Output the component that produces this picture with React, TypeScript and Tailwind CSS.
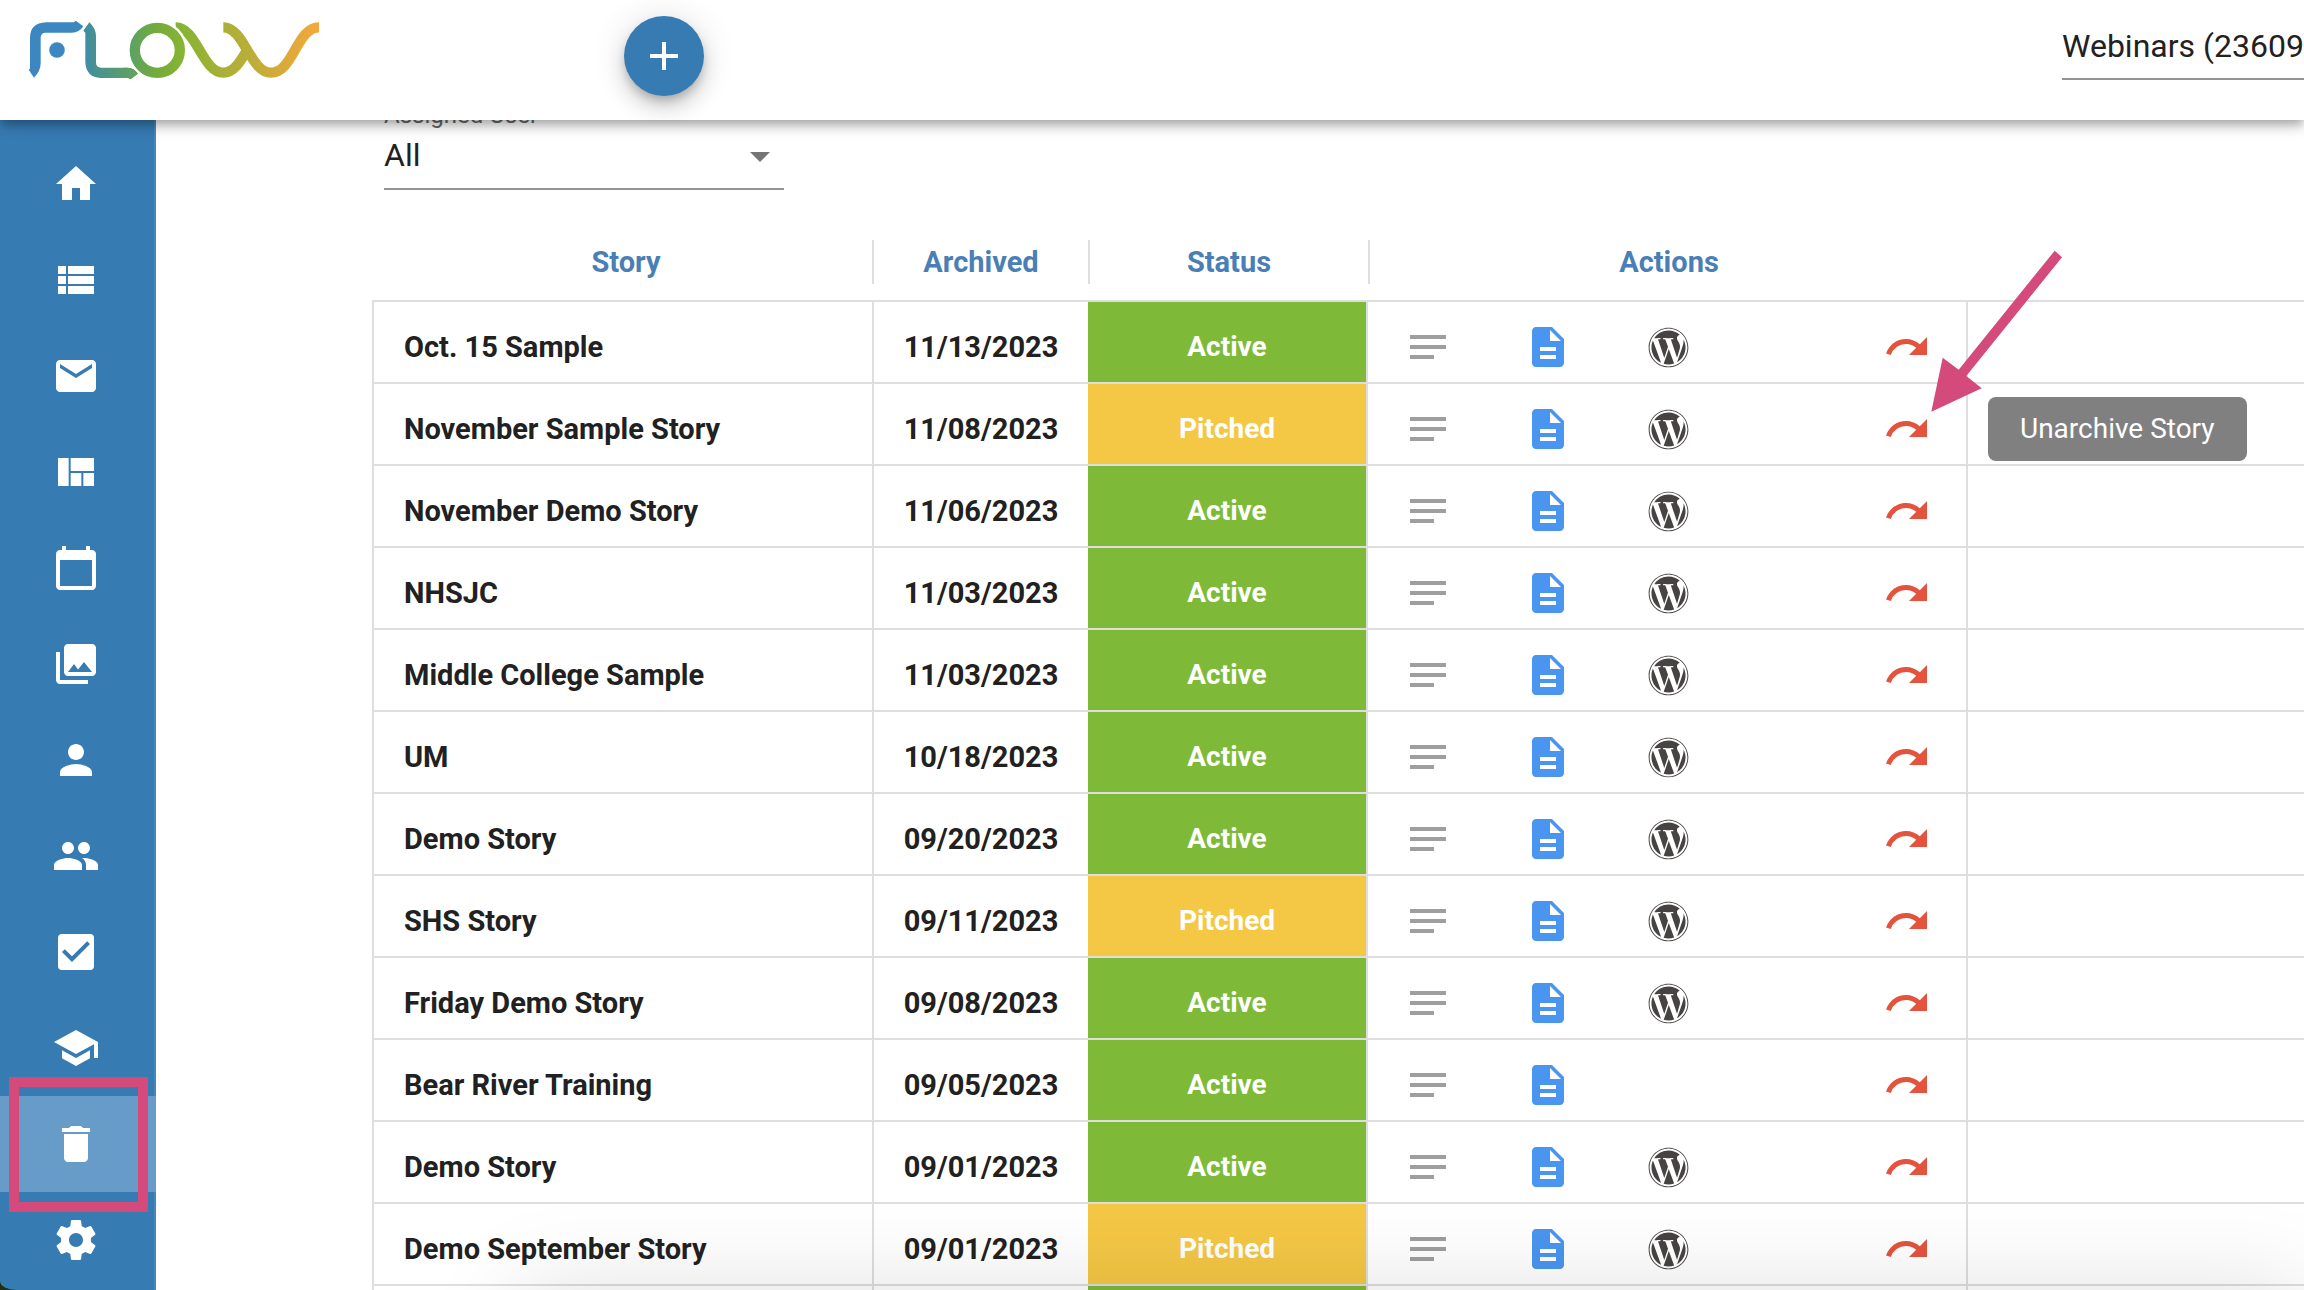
import type { ReactNode } from "react";
import type { IconType } from "react-icons";
import {
  MdAdd,
  MdArrowDropDown,
  MdCalendarToday,
  MdCheckBox,
  MdDelete,
  MdDescription,
  MdEmail,
  MdHome,
  MdNotes,
  MdPeople,
  MdPerson,
  MdPhotoLibrary,
  MdRedo,
  MdSchool,
  MdViewList,
  MdViewQuilt,
} from "react-icons/md";
import { FaWordpress } from "react-icons/fa";

type Status = "Active" | "Pitched";

interface Story {
  title: string;
  archived: string;
  status: Status;
  wordpress: boolean;
  tooltip?: boolean;
}

const stories: Story[] = [
  { title: "Oct. 15 Sample", archived: "11/13/2023", status: "Active", wordpress: true },
  { title: "November Sample Story", archived: "11/08/2023", status: "Pitched", wordpress: true, tooltip: true },
  { title: "November Demo Story", archived: "11/06/2023", status: "Active", wordpress: true },
  { title: "NHSJC", archived: "11/03/2023", status: "Active", wordpress: true },
  { title: "Middle College Sample", archived: "11/03/2023", status: "Active", wordpress: true },
  { title: "UM", archived: "10/18/2023", status: "Active", wordpress: true },
  { title: "Demo Story", archived: "09/20/2023", status: "Active", wordpress: true },
  { title: "SHS Story", archived: "09/11/2023", status: "Pitched", wordpress: true },
  { title: "Friday Demo Story", archived: "09/08/2023", status: "Active", wordpress: true },
  { title: "Bear River Training", archived: "09/05/2023", status: "Active", wordpress: false },
  { title: "Demo Story", archived: "09/01/2023", status: "Active", wordpress: true },
  { title: "Demo September Story", archived: "09/01/2023", status: "Pitched", wordpress: true },
];

function GearIcon({ className }: { className?: string }) {
  return (
    <svg viewBox="0 0 24 24" className={className} fill="currentColor" aria-hidden="true">
      <path d="M19.43 12.98c.04-.32.07-.64.07-.98s-.03-.66-.07-.98l2.11-1.65c.19-.15.24-.42.12-.64l-2-3.46c-.12-.22-.39-.3-.61-.22l-2.49 1c-.52-.4-1.08-.73-1.69-.98l-.38-2.65C14.46 2.18 14.25 2 14 2h-4c-.25 0-.46.18-.49.42l-.38 2.65c-.61.25-1.17.59-1.69.98l-2.49-1c-.23-.09-.49 0-.61.22l-2 3.46c-.13.22-.07.49.12.64l2.11 1.65c-.04.32-.07.65-.07.98s.03.66.07.98l-2.11 1.65c-.19.15-.24.42-.12.64l2 3.46c.12.22.39.3.61.22l2.49-1c.52.4 1.08.73 1.69.98l.38 2.65c.03.24.24.42.49.42h4c.25 0 .46-.18.49-.42l.38-2.65c.61-.25 1.17-.59 1.69-.98l2.49 1c.23.09.49 0 .61-.22l2-3.46c.12-.22.07-.49-.12-.64l-2.11-1.65zM12 15.5c-1.93 0-3.5-1.57-3.5-3.5s1.57-3.5 3.5-3.5 3.5 1.57 3.5 3.5-1.57 3.5-3.5 3.5z" />
    </svg>
  );
}

interface NavItem {
  label: string;
  icon: IconType | typeof GearIcon;
  active?: boolean;
}

const navItems: NavItem[] = [
  { label: "Home", icon: MdHome },
  { label: "Stories", icon: MdViewList },
  { label: "Mail", icon: MdEmail },
  { label: "Boards", icon: MdViewQuilt },
  { label: "Calendar", icon: MdCalendarToday },
  { label: "Media library", icon: MdPhotoLibrary },
  { label: "Profile", icon: MdPerson },
  { label: "Team", icon: MdPeople },
  { label: "Tasks", icon: MdCheckBox },
  { label: "Training", icon: MdSchool },
  { label: "Archive", icon: MdDelete, active: true },
  { label: "Settings", icon: GearIcon },
];

function Logo() {
  return (
    <svg viewBox="0 0 1200 360" className="h-[120px] w-[400px] shrink-0" role="img" aria-label="Flow">
      <defs>
        <linearGradient id="flow" gradientUnits="userSpaceOnUse" x1="90" y1="0" x2="957" y2="0">
          <stop offset="0.17" stopColor="#3c87c0" />
          <stop offset="0.21" stopColor="#448f98" />
          <stop offset="0.36" stopColor="#5fa35f" />
          <stop offset="0.44" stopColor="#74ab3a" />
          <stop offset="0.53" stopColor="#88b434" />
          <stop offset="0.67" stopColor="#a9b037" />
          <stop offset="0.75" stopColor="#b8ae37" />
          <stop offset="0.84" stopColor="#d0ab39" />
          <stop offset="1" stopColor="#f5a83b" />
        </linearGradient>
        <clipPath id="rise">
          <path d="M500 40H722L748 150V260H500Z" />
        </clipPath>
      </defs>
      <path
        fill="url(#flow)"
        d="M90 206L86 209L102 233Q122 213 122 190V114Q122 98 138 98H215Q238 98 250 79L227 62L222 67H138Q90 69 90 114Z"
      />
      <circle cx="171" cy="150" r="23.5" fill="url(#flow)" />
      <path
        fill="url(#flow)"
        d="M268 67L250 92L256 98V186Q258 232 302 234H385L391 238L414 221Q402 203 383 203H304Q288 203 288 187V110Q288 85 268 67Z"
      />
      <g fill="none" stroke="url(#flow)" strokeWidth="31">
        <path clipPath="url(#rise)" d="M527 82C590 82 607 218 670 218C733 218 750 82 813 82" />
        <path d="M670 82C733 82 750 218 813 218C880 218 890 82 957 82" />
      </g>
      <circle cx="472" cy="151" r="90" fill="#fff" />
      <path fill="url(#flow)" d="M414 221Q402 203 383 203H370V234H385L391 238Z" />
      <circle cx="472" cy="151" r="67.5" fill="none" stroke="url(#flow)" strokeWidth="31" />
    </svg>
  );
}

function Header() {
  return (
    <header className="relative z-20 flex h-[120px] shrink-0 items-start bg-white shadow-[0_4px_8px_-2px_rgba(0,0,0,0.2),0_8px_10px_0_rgba(0,0,0,0.14),0_2px_20px_0_rgba(0,0,0,0.12)]">
      <Logo />
      <button
        type="button"
        aria-label="Add"
        className="mt-4 ml-56 flex size-20 shrink-0 items-center justify-center rounded-full bg-[#377bb3] text-white shadow-[0_6px_10px_-2px_rgba(0,0,0,0.2),0_12px_20px_0_rgba(0,0,0,0.14),0_2px_36px_0_rgba(0,0,0,0.12)]"
      >
        <MdAdd className="size-12" />
      </button>
      <div className="ml-auto w-[242px] overflow-hidden pt-3">
        <select
          aria-label="Organization"
          className="h-[68px] w-[400px] appearance-none border-b-2 border-[#949494] bg-transparent pt-0.5 text-[32px] text-[#212121]"
        >
          <option>Webinars (23609)</option>
        </select>
      </div>
    </header>
  );
}

function Sidebar() {
  return (
    <div className="flex shrink-0 bg-[#22300c]">
      <nav className="w-[156px] rounded-bl-[16px_9px] border-r-2 border-[#4787bb] bg-[#377bb3] pt-4">
        {navItems.map(({ label, icon: Icon, active }) => (
          <a
            key={label}
            href="#"
            aria-label={label}
            className={
              active
                ? "relative -mr-0.5 flex h-24 items-center bg-[#689cc8] pl-[52px] text-white"
                : "flex h-24 items-center pl-[52px] text-white"
            }
          >
            <Icon className="size-12" />
            {active && <span className="absolute -top-[19px] left-[9px] h-[135px] w-[139px] border-10 border-[#d44a7a]" />}
          </a>
        ))}
      </nav>
    </div>
  );
}

function ActionSlot({ children, last }: { children?: ReactNode; last?: boolean }) {
  return (
    <div className={last ? "relative flex h-12 w-[118px] items-center justify-center" : "flex h-12 w-[120px] items-center justify-center"}>
      {children}
    </div>
  );
}

function IconButton({ label, className, children }: { label: string; className: string; children: ReactNode }) {
  return (
    <button type="button" aria-label={label} className={className}>
      {children}
    </button>
  );
}

function PointerArrow() {
  return (
    <svg viewBox="0 0 132 163" className="absolute -top-[155px] left-[83px] z-10 h-[163px] w-[132px]" aria-hidden="true">
      <path fill="#d44a7a" d="M0.3 161.7L11.7 107.7L27.7 119.7L123.7 0.7L131 7.3L35.3 126L50.7 138.3Z" />
    </svg>
  );
}

function StoryRow({ story }: { story: Story }) {
  return (
    <tr>
      <td className="border-2 border-b-0 border-[#dedede] p-0">
        <div className="flex h-20 items-center pt-2.5 pl-[30px] font-bold">{story.title}</div>
      </td>
      <td className="border-t-2 border-[#dedede] p-0">
        <div className="flex h-20 items-center justify-center pt-2.5 font-bold">{story.archived}</div>
      </td>
      <td className="border-t-2 border-r-2 border-[#dedede] p-0">
        <div
          className={
            story.status === "Active"
              ? "flex h-20 items-center justify-center bg-[#7eba38] pt-2.5 text-[28px] font-bold text-white"
              : "flex h-20 items-center justify-center bg-[#f4c745] pt-2.5 text-[28px] font-bold text-white"
          }
        >
          {story.status}
        </div>
      </td>
      <td className="border-t-2 border-r-2 border-[#dedede] p-0">
        <div className="flex h-20 items-center pt-2.5">
          <ActionSlot>
            <IconButton label="Notes" className="text-[#9e9e9e]">
              <MdNotes className="size-12" />
            </IconButton>
          </ActionSlot>
          <ActionSlot>
            <IconButton label="Document" className="text-[#4a95ef]">
              <MdDescription className="size-12" />
            </IconButton>
          </ActionSlot>
          <ActionSlot>
            {story.wordpress && (
              <IconButton label="WordPress" className="text-[#464342]">
                <FaWordpress className="size-[41px]" />
              </IconButton>
            )}
          </ActionSlot>
          <ActionSlot />
          <ActionSlot last>
            <IconButton label="Unarchive" className="text-[#e4533e]">
              <MdRedo className="size-12" />
            </IconButton>
            {story.tooltip && (
              <>
                <span
                  role="tooltip"
                  className="absolute -top-2 left-[140px] flex h-16 items-center rounded-lg bg-[#808080] px-8 text-[28px] whitespace-nowrap text-white"
                >
                  Unarchive Story
                </span>
                <PointerArrow />
              </>
            )}
          </ActionSlot>
        </div>
      </td>
      <td className="border-t-2 border-[#dedede] p-0" />
    </tr>
  );
}

function NextRowEdge() {
  return (
    <tr aria-hidden="true">
      <td className="h-20 border-2 border-b-0 border-[#dedede] p-0" />
      <td className="border-t-2 border-[#dedede] p-0" />
      <td className="border-t-2 border-r-2 border-[#dedede] p-0">
        <div className="h-20 bg-[#7eba38]" />
      </td>
      <td className="border-t-2 border-r-2 border-[#dedede] p-0" />
      <td className="border-t-2 border-[#dedede] p-0" />
    </tr>
  );
}

function StoryTable() {
  return (
    <table className="mt-[50px] w-full table-fixed border-separate border-spacing-0 text-[29px] leading-8">
      <colgroup>
        <col className="w-[502px]" />
        <col className="w-[214px]" />
        <col className="w-[280px]" />
        <col className="w-[600px]" />
        <col />
      </colgroup>
      <thead>
        <tr className="h-[60px] align-top text-[#4a7fb5]">
          <th className="p-0">
            <div className="flex h-11 items-center justify-center border-r-2 border-[#dedede] pl-2">Story</div>
          </th>
          <th className="p-0">
            <div className="flex h-11 items-center justify-center">Archived</div>
          </th>
          <th className="p-0">
            <div className="flex h-11 items-center justify-center border-l-2 border-[#dedede]">Status</div>
          </th>
          <th className="p-0">
            <div className="flex h-11 items-center justify-center border-l-2 border-[#dedede]">Actions</div>
          </th>
          <td className="p-0" />
        </tr>
      </thead>
      <tbody>
        {stories.map((story) => (
          <StoryRow key={story.title + story.archived} story={story} />
        ))}
        <NextRowEdge />
      </tbody>
    </table>
  );
}

export default function App() {
  return (
    <div className="relative flex h-screen flex-col overflow-hidden bg-white font-[Roboto,sans-serif] text-[#212121]">
      <Header />
      <div className="flex min-h-0 flex-1">
        <Sidebar />
        <main className="min-w-0 flex-1 pl-[216px]">
          <div className="-mt-[19px] ml-3 w-[400px]">
            <label htmlFor="assigned" className="block text-2xl leading-7 text-[#666]">
              Assigned User
            </label>
            <div className="relative">
              <select
                id="assigned"
                className="block h-[61px] w-full appearance-none border-b-2 border-[#949494] bg-transparent pb-2 text-[32px]"
              >
                <option>All</option>
              </select>
              <MdArrowDropDown className="pointer-events-none absolute top-[3px] right-0 size-12 text-[#757575]" />
            </div>
          </div>
          <StoryTable />
        </main>
      </div>
      <div className="pointer-events-none absolute top-full right-0 left-[520px] h-24 shadow-[0_0_96px_0_rgba(0,0,0,0.13)]" />
    </div>
  );
}
